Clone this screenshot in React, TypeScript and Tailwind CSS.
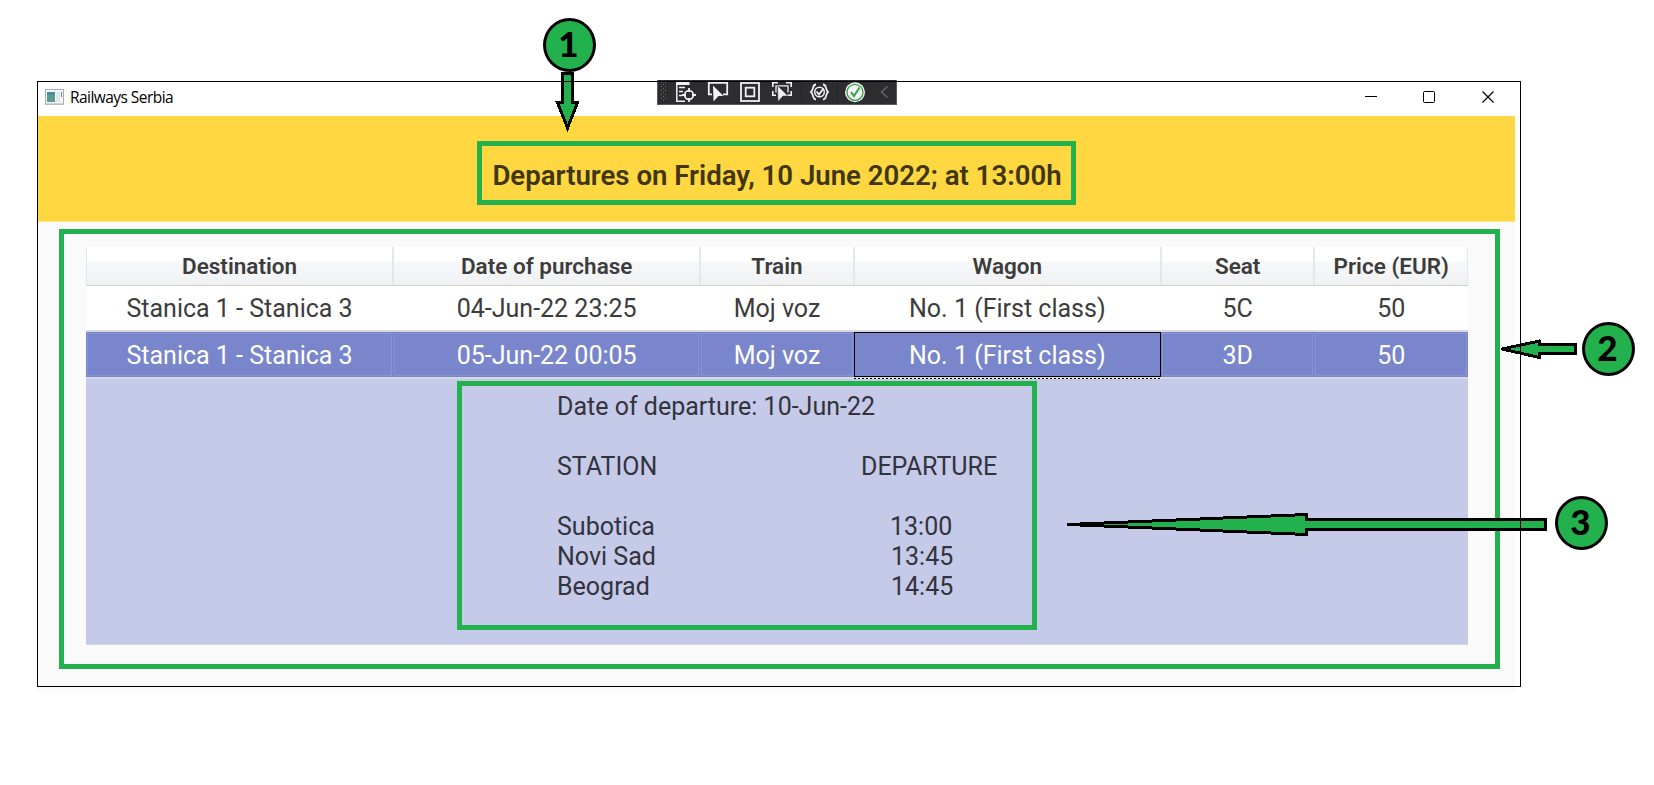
import React from "react";

const columns = ["Destination", "Date of purchase", "Train", "Wagon", "Seat", "Price (EUR)"];
const rows = [
  ["Stanica 1 - Stanica 3", "04-Jun-22 23:25", "Moj voz", "No. 1 (First class)", "5C", "50"],
  ["Stanica 1 - Stanica 3", "05-Jun-22 00:05", "Moj voz", "No. 1 (First class)", "3D", "50"],
];
const stops = [
  ["Subotica", "13:00"],
  ["Novi Sad", "13:45"],
  ["Beograd", "14:45"],
];
const grid = "grid grid-cols-[2fr_2fr_1fr_2fr_1fr_1fr]";

function AppIcon() {
  return (
    <svg width="20" height="17" viewBox="0 0 20 17" className="block">
      <rect x="0.5" y="0.5" width="18" height="14.5" fill="#f4f5f6" stroke="#a9adb2" />
      <rect x="0" y="15" width="19" height="1" fill="#b9bcbf" />
      <rect x="2" y="3" width="8" height="10" fill="#5a9c8f" />
      <rect x="2" y="3" width="8" height="3" fill="#4f86a0" />
      <rect x="11" y="3" width="4" height="10" fill="#e4e6e8" />
      <rect x="16" y="3" width="1" height="5" fill="#4f9a86" />
    </svg>
  );
}

const dots = [2, 6, 10, 14, 18].flatMap((y) => [[4, y], [8, y], [6, y + 2]]);

function DebugToolbar() {
  return (
    <svg width="240" height="25" viewBox="0 0 240 25" className="block">
      <rect width="240" height="25" fill="#2d2d30" />
      <path d="M0.5 0V24.5H239.5V0" fill="none" stroke="#5a5a5c" />
      {dots.map(([x, y]) => (
        <rect key={`${x}-${y}`} x={x} y={y} width="1" height="1" fill="#6a6a6c" />
      ))}
      <g fill="none" stroke="#f1f1f1" strokeWidth="1.3">
        <path d="M19.800 2V21.300H28" strokeWidth="1.500" />
        <path d="M19 3.500H32.500" strokeWidth="3" />
        <path d="M22 7.500H28M22 11.500H26M22 15.500H25" />
        <circle cx="32" cy="15" r="4.300" strokeWidth="1.800" />
        <path d="M32 8V12M32 18V22M25 15H29M35 15H39" strokeWidth="1.800" />
        <path d="M55 14.300H51.800V2.800H70.200V14.300H66" strokeWidth="1.800" />
        <rect x="84" y="3" width="18" height="18" strokeWidth="1.800" />
        <rect x="88.700" y="7.700" width="8.600" height="8.600" strokeWidth="1.800" />
        <path d="M115.800 7V2.800H121M129 2.800H134.200V7M115.800 11V15.300H119M134.200 11V15.300H130" strokeWidth="1.600" />
        <path d="M119 12.500V5.800H131V12.500" />
      </g>
      <path d="M56 5.500L66.500 16H61.500L56.500 21.500Z" fill="#f1f1f1" />
      <path d="M120.500 5.500L131 16H126L121 21.500Z" fill="#f1f1f1" stroke="#2d2d30" strokeWidth="0.500" />
      <path d="M144.500 3V20M180.500 3V20" stroke="#222224" />
      <g fill="none" stroke="#f1f1f1" strokeWidth="1.800">
        <path d="M159 4.500C155 4.500 157 9.500 154 12C157 14.500 155 19.500 159 19.500" />
        <path d="M166 4.500C170 4.500 168 9.500 171 12C168 14.500 170 19.500 166 19.500" />
        <circle cx="162.500" cy="12" r="4.800" strokeWidth="1.500" />
        <path d="M159.500 11.500L162 14.500L166.500 8.500" />
      </g>
      <circle cx="198" cy="12.300" r="10" fill="#f1f1f1" />
      <circle cx="198" cy="12.300" r="8" fill="#f5f5f5" stroke="#37a046" strokeWidth="1.300" />
      <path d="M194 12L197 16L202.500 7.500" fill="none" stroke="#37a046" strokeWidth="2" />
      <path d="M230.500 6.500L224.500 12L230.500 17.500" fill="none" stroke="#6a6a6c" strokeWidth="1.300" />
    </svg>
  );
}

function WindowButtons() {
  return (
    <svg width="130" height="14" viewBox="0 0 130 14" className="block" fill="none" stroke="#000">
      <path d="M0 6.500H12" />
      <rect x="58.500" y="1.500" width="11" height="11" rx="1" />
      <path d="M117.500 1.500L128.500 12.500M128.500 1.500L117.500 12.500" strokeWidth="1.200" />
    </svg>
  );
}

const steps = [1067, 1080, 1104, 1128, 1152, 1176, 1200, 1223, 1247, 1271, 1295, 1308];

function Arrows() {
  return (
    <svg width="1654" height="785" viewBox="0 0 1654 785" className="block" shapeRendering="crispEdges">
      <g fill="#22b14c" stroke="#000" strokeWidth="3">
        <path d="M562.500 73.500H572.500V102.500H577.500L567.500 128L557.500 102.500H562.500Z" />
        <path d="M1502 349L1539.500 341V344.500H1575.500V353.500H1539.500V357.500Z" strokeLinejoin="round" />
      </g>
      <g>
        {steps.slice(0, 11).map((x, i) => (
          <rect key={x} x={x} y={523 - i} width={steps[i + 1] - x} height={3 + 2 * i} fill="#000" />
        ))}
        <rect x="1306" y="518" width="241" height="13" fill="#000" />
        {steps.slice(2, 11).map((x, i) => (
          <rect key={x} x={x} y={524 - i} width={steps[i + 3] - x - (i === 8 ? 3 : 0)} height={1 + 2 * i} fill="#22b14c" />
        ))}
        <rect x="1304" y="521" width="240" height="7" fill="#22b14c" />
      </g>
      <path d="M556 81.500H580M1520.500 335V362M1520.500 512V536" stroke="#000" />
    </svg>
  );
}

function Badge({ n, className }: { n: number; className: string }) {
  return (
    <div
      className={`absolute flex h-[54px] w-[53px] items-center justify-center rounded-[50%] border-[3px] border-black bg-[#22b14c] pr-[2px] pb-[4px] font-['Lato',sans-serif] text-[35px] leading-none font-black text-black ${className}`}
    >
      {n}
    </div>
  );
}

function cellClass(selected: boolean, focused: boolean) {
  if (!selected) return "flex items-center justify-center";
  if (focused) return "relative z-10 flex items-center justify-center border border-black";
  return "flex items-center justify-center border border-[#7986cb] outline outline-1 -outline-offset-2 outline-[#8692d2]";
}

export default function App() {
  return (
    <div className="relative h-[785px] w-[1654px] overflow-hidden bg-white pt-[81px] pl-[37px] font-['Roboto',sans-serif] text-[#3c3c3c]">
      <div className="relative flex h-[606px] w-[1484px] flex-col">
        <header className="flex h-[35px] shrink-0 items-start justify-between pt-[7px] pr-[26px] pl-2">
          <div className="flex items-start gap-[5px]">
            <div className="pt-[1px]"><AppIcon /></div>
            <span className="font-['Open_Sans',sans-serif] text-[15.5px] leading-[18px] tracking-[-0.55px] text-black">Railways Serbia</span>
          </div>
          <div className="pt-[2px]"><WindowButtons /></div>
        </header>

        <section className="flex h-[106px] w-[1478px] shrink-0 justify-center border-b border-[#fde58a] bg-[#ffd740] pt-[25px]">
          <h1 className="flex h-[64px] w-[599px] items-center justify-center border-[5px] border-[#22b14c] pt-[6px] pl-[2px] text-[27.6px] font-semibold whitespace-nowrap text-[#403612]">
            Departures on Friday, 10 June 2022; at 13:00h
          </h1>
        </section>

        <main className="h-[469px] w-[1478px] shrink-0 bg-[#fafafa] pt-[7px] pl-[22px]">
          <div className="h-[440px] w-[1441px] border-[5px] border-[#22b14c] pt-[13px] pl-[22px]">
            <div className="flex h-[398px] w-[1382px] flex-col bg-white">
              <div className={`${grid} h-[39px] shrink-0 border-b border-[#d0d0d0] bg-[linear-gradient(#fff_0,#fff_15px,#f7f8f9_15px,#f0f1f3_100%)]`}>
                {columns.map((c) => (
                  <div key={c} className="flex items-center justify-center border-x border-[#e6e7e9] pt-[2px] text-[22.5px] font-semibold whitespace-nowrap">
                    {c}
                  </div>
                ))}
              </div>
              {rows.map((row, r) => (
                <div
                  key={r}
                  className={`${grid} shrink-0 text-[25px] whitespace-nowrap ${
                    r === 1 ? "h-[47px] border-b-2 border-[#d8d8e0] bg-[#7986cb] text-white" : "h-[46px] border-b-2 border-[#d8d8dc]"
                  }`}
                >
                  {row.map((cell, c) => (
                    <div key={c} className={cellClass(r === 1, c === 3)}>
                      <span className="pt-[2px]">{cell}</span>
                      {r === 1 && c === 3 && (
                        <span className="absolute -inset-x-px -bottom-[3px] h-px bg-[repeating-linear-gradient(90deg,#000_0,#000_2px,#e8e8e8_2px,#e8e8e8_4px)]" />
                      )}
                    </div>
                  ))}
                </div>
              ))}
              <div className="flex-1 border-b border-[#d6d6dc] bg-[#c5cae9] pt-[2px] pl-[371px]">
                <div className="h-[249px] w-[580px] border-[5px] border-[#22b14c] pt-[6px] pl-[95px] text-[25px] leading-[30px] text-[#32333c]">
                  <p>Date of departure: 10-Jun-22</p>
                  <div className="grid grid-cols-[297px_150px] pt-[30px]">
                    <span>STATION</span>
                    <span className="pl-[7px]">DEPARTURE</span>
                  </div>
                  <div className="grid grid-cols-[297px_140px] pt-[30px]">
                    {stops.map(([name, time], i) => (
                      <React.Fragment key={name}>
                        <span>{name}</span>
                        <span className={i === 0 ? "pl-[36px]" : "pl-[37px]"}>{time}</span>
                      </React.Fragment>
                    ))}
                  </div>
                </div>
              </div>
            </div>
          </div>
        </main>

        <div className="absolute -top-px left-[620px]"><DebugToolbar /></div>
        <div className="pointer-events-none absolute inset-0 border border-black" />
      </div>

      <div className="pointer-events-none absolute inset-0"><Arrows /></div>
      <Badge n={1} className="top-[18px] left-[543px]" />
      <Badge n={2} className="top-[322px] left-[1582px]" />
      <Badge n={3} className="top-[496px] left-[1555px]" />
    </div>
  );
}
